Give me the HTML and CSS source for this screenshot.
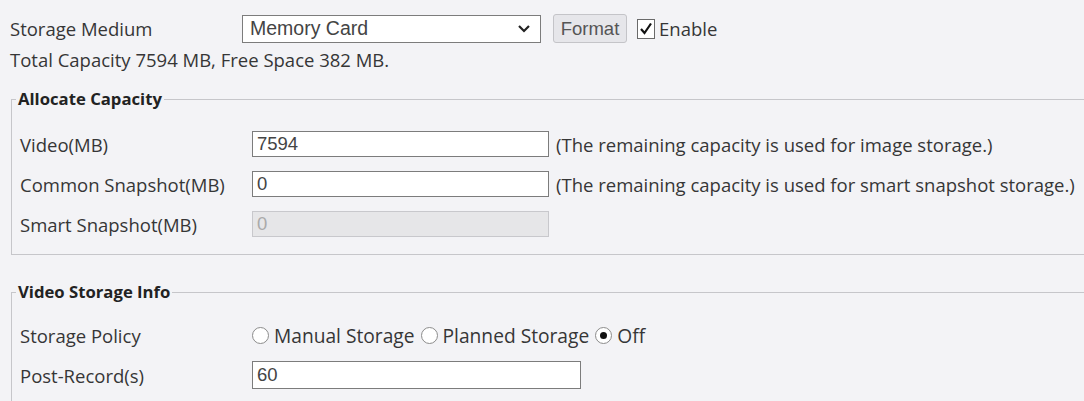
FILE: index.html
```html
<!DOCTYPE html>
<html lang="en">

<head>
    <meta charset="UTF-8">
    <meta name="viewport" content="width=device-width, initial-scale=1.0">
    <title>Storage</title>
    <link rel="stylesheet" href="styles.css">
</head>

<body>
    <div class="page">
        <div class="row top-row">
            <span class="label">Storage Medium</span>
            <div class="select-box">
                <span>Memory Card</span>
                <svg class="chevron" width="14" height="10" viewBox="0 0 14 10">
                    <path d="M2 2 L7 7 L12 2" fill="none" stroke="#222" stroke-width="2.2"/>
                </svg>
            </div>
            <button class="btn">Format</button>
            <span class="check">
                <svg width="18" height="20" viewBox="0 0 18 20">
                    <rect x="0.5" y="0.5" width="17" height="19" fill="#fff" stroke="#6a6a6a"/>
                    <path d="M4 10 L7.5 14 L14 4.5" fill="none" stroke="#111" stroke-width="2.2"/>
                </svg>
            </span>
            <span class="check-text">Enable</span>
        </div>

        <div class="capacity">Total Capacity 7594 MB, Free Space 382 MB.</div>

        <fieldset class="group">
            <legend>Allocate Capacity</legend>
            <div class="row field">
                <span class="label">Video(MB)</span>
                <input type="text" class="text-input" value="7594">
                <span class="hint">(The remaining capacity is used for image storage.)</span>
            </div>
            <div class="row field">
                <span class="label">Common Snapshot(MB)</span>
                <input type="text" class="text-input" value="0">
                <span class="hint">(The remaining capacity is used for smart snapshot storage.)</span>
            </div>
            <div class="row field">
                <span class="label">Smart Snapshot(MB)</span>
                <input type="text" class="text-input" value="0" disabled>
            </div>
        </fieldset>

        <fieldset class="group second">
            <legend>Video Storage Info</legend>
            <div class="row field">
                <span class="label">Storage Policy</span>
                <span class="radio"></span><span class="radio-text">Manual Storage</span>
                <span class="radio"></span><span class="radio-text">Planned Storage</span>
                <span class="radio on"></span><span class="radio-text">Off</span>
            </div>
            <div class="row field">
                <span class="label">Post-Record(s)</span>
                <input type="text" class="text-input wide" value="60">
            </div>
        </fieldset>
    </div>
</body>

</html>
```

FILE: styles.css
```css
/* Global */
body {
    margin: 0;
    background-color: #f3f3f6;
    color: #363636;
    font-family: "Open Sans", "Noto Sans", sans-serif;
    font-size: 18.5px;
    overflow: hidden;
}

.page {
    padding-left: 10px;
}

.row {
    display: flex;
    align-items: center;
}

.label {
    width: 232px;
    flex-shrink: 0;
}

/* Top line */
.top-row {
    margin-top: 14px;
    height: 29px;
}

.select-box {
    display: flex;
    align-items: center;
    justify-content: space-between;
    box-sizing: border-box;
    width: 299px;
    height: 28px;
    padding: 0 9px 0 7px;
    border: 1px solid #7c7c7c;
    background-color: #fff;
    font-family: "Liberation Sans", Arial, sans-serif;
    font-size: 19.5px;
    color: #444;
}

.btn {
    margin-left: 12px;
    height: 29px;
    width: 74px;
    padding: 0;
    background-color: #e6e6ea;
    border: 1px solid #c4c4c8;
    border-radius: 3px;
    font-family: "Liberation Sans", Arial, sans-serif;
    font-size: 18.5px;
    color: #555;
}

.check {
    margin-left: 10px;
    display: flex;
}

.check-text {
    margin-left: 4px;
}

.capacity {
    height: 24px;
    line-height: 24px;
    margin-top: 5px;
}

/* Fieldsets */
.group {
    margin: 15px -40px 0 1px;
    padding: 0 8px 10px 8px;
    border: 1px solid #c6c6ca;
}

.group legend {
    margin-left: -4px;
    padding: 0 2px;
    font-weight: bold;
    font-size: 16.7px;
    line-height: 24px;
    color: #222;
}

.group .field:first-of-type {
    margin-top: 13px;
}

.field {
    height: 40px;
}

.second {
    margin-top: 25px;
}

.second .field:first-of-type {
    margin-top: 11px;
}

.text-input {
    width: 297px;
    height: 26px;
    box-sizing: border-box;
    margin: 0;
    padding: 0 4px;
    border: 1px solid #7c7c7c;
    background-color: #fff;
    font-family: "Liberation Sans", Arial, sans-serif;
    font-size: 18.5px;
    color: #444;
    outline: none;
}

.text-input:disabled {
    background-color: #e6e6e8;
    border-color: #c8c8cc;
    color: #aaa;
}

.text-input.wide {
    width: 329px;
    height: 28px;
}

.hint {
    margin-left: 7px;
}

/* Radios */
.radio {
    display: flex;
    align-items: center;
    justify-content: center;
    box-sizing: border-box;
    width: 17px;
    height: 17px;
    border: 1px solid #8c8c8c;
    border-radius: 50%;
    background-color: #fff;
}

.radio.on::after {
    content: "";
    width: 7px;
    height: 7px;
    border-radius: 50%;
    background-color: #111;
}

.radio-text {
    margin-left: 5px;
    margin-right: 6px;
    font-size: 19.2px;
}
```
